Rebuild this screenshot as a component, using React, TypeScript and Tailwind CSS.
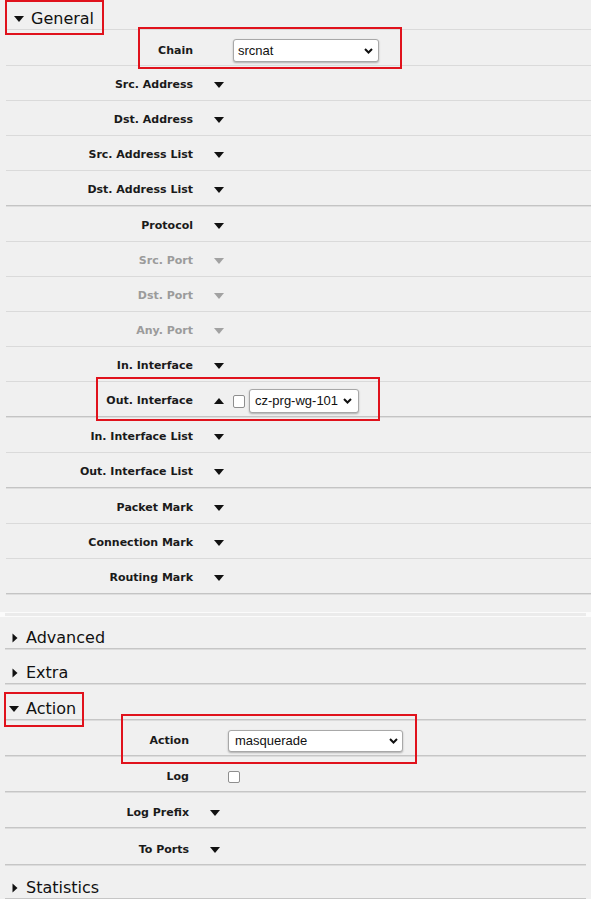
import React from "react";

const LABEL = "font-['DejaVu_Sans',Verdana,sans-serif] font-bold text-[11px] leading-[14px]";
const HEAD = "font-['DejaVu_Sans',Verdana,sans-serif] text-[16px] leading-[19px] text-[#111]";
const SELTXT = "font-['Liberation_Sans',Arial,sans-serif] text-[13px] leading-[16px] text-[#111]";

function Down({ c = "#111" }: { c?: string }) {
  return (
    <svg width="10" height="6" viewBox="0 0 10 6" className="shrink-0">
      <polygon points="0,0 10,0 5,6" fill={c} />
    </svg>
  );
}
function Up() {
  return (
    <svg width="10" height="6" viewBox="0 0 10 6" className="shrink-0">
      <polygon points="0,6 10,6 5,0" fill="#111" />
    </svg>
  );
}
function Right() {
  return (
    <svg width="10" height="10" viewBox="0 0 10 10" className="shrink-0">
      <polygon points="3.5,0.5 8.5,5 3.5,9.5" fill="#111" />
    </svg>
  );
}
function Chevron() {
  return (
    <svg width="9" height="6" viewBox="0 0 9 6" className="shrink-0">
      <path d="M1 1 L4.5 4.5 L8 1" stroke="#111" strokeWidth="2" fill="none" />
    </svg>
  );
}

function Sel({ box, text, pl, pr }: { box: string; text: string; pl: string; pr: string }) {
  return (
    <div
      className={`flex items-center justify-between bg-white border border-[#a8a8a8] rounded-[3px] shadow-[0_1px_2px_rgba(0,0,0,0.28)] ${box} ${pl} ${pr}`}
    >
      <span className={SELTXT}>{text}</span>
      <Chevron />
    </div>
  );
}

function Check({ box }: { box: string }) {
  return <div className={`bg-white border border-[#8e8e8e] rounded-[2px] shrink-0 ${box}`} />;
}

function LightLine() {
  return <div className="h-px bg-[#dadada]" />;
}
function GroupLine() {
  return (
    <>
      <div className="h-px bg-[#c4c4c4]" />
      <div className="h-px bg-[#dedede]" />
    </>
  );
}

type UpperRow = {
  label: string;
  kind?: "chain" | "out";
  dim?: boolean;
  group?: boolean;
};

const upper: UpperRow[] = [
  { label: "Chain", kind: "chain" },
  { label: "Src. Address" },
  { label: "Dst. Address" },
  { label: "Src. Address List" },
  { label: "Dst. Address List", group: true },
  { label: "Protocol" },
  { label: "Src. Port", dim: true },
  { label: "Dst. Port", dim: true },
  { label: "Any. Port", dim: true },
  { label: "In. Interface" },
  { label: "Out. Interface", kind: "out", group: true },
  { label: "In. Interface List" },
  { label: "Out. Interface List", group: true },
  { label: "Packet Mark" },
  { label: "Connection Mark" },
  { label: "Routing Mark", group: true },
];

function UpperRowView({ r }: { r: UpperRow }) {
  return (
    <>
      <div className={`flex items-center ${r.kind === "chain" ? "h-[35px] pt-[6px]" : "h-[34px] pt-[4px]"}`}>
        <div className={`w-[187px] text-right ${LABEL} ${r.dim ? "text-[#9b9b9b]" : "text-[#1a1a1a]"}`}>
          {r.label}
        </div>
        {r.kind === "chain" ? (
          <div className="ml-[40px]">
            <Sel box="w-[146px] h-[23px]" text="srcnat" pl="pl-[4px]" pr="pr-[5px]" />
          </div>
        ) : r.kind === "out" ? (
          <div className="ml-[21px] flex items-center">
            <Up />
            <div className="ml-[9px]">
              <Check box="w-[12px] h-[13px]" />
            </div>
            <div className="ml-[4px]">
              <Sel box="w-[110px] h-[24px]" text="cz-prg-wg-101" pl="pl-[5px]" pr="pr-[6px]" />
            </div>
          </div>
        ) : (
          <div className="ml-[21px] flex items-center">
            <Down c={r.dim ? "#a2a2a2" : "#111"} />
          </div>
        )}
      </div>
      {r.group ? <GroupLine /> : <LightLine />}
    </>
  );
}

function LowerLine() {
  return (
    <>
      <div className="h-px bg-[#c6c6c6]" />
      <div className="h-px bg-[#dcdcdc]" />
    </>
  );
}

function LowerHeader({ title, open, h }: { title: string; open?: boolean; h: string }) {
  return (
    <>
      <div className={`flex items-end pb-[1px] ${h}`}>
        <div className="ml-[4px] w-[10px] h-[19px] flex items-center">
          {open ? <Down /> : <Right />}
        </div>
        <span className={`ml-[7px] ${HEAD}`}>{title}</span>
      </div>
      <LowerLine />
    </>
  );
}

function LowerRow({ label, children, h = "h-[34px]" }: { label: string; children: React.ReactNode; h?: string }) {
  return (
    <>
      <div className={`flex items-center pt-[6px] ${h}`}>
        <div className={`w-[184px] text-right ${LABEL} text-[#1a1a1a]`}>{label}</div>
        {children}
      </div>
      <LowerLine />
    </>
  );
}

function RedBox({ cls }: { cls: string }) {
  return <div className={`absolute border-2 border-[#e0121c] pointer-events-none ${cls}`} />;
}

export default function App() {
  return (
    <div className="relative w-[591px] h-[899px] overflow-hidden bg-[#f0f0f0]">
      {/* Upper section: General */}
      <div className="ml-[6px]">
        <div className="flex items-end pb-[1px] h-[29px]">
          <div className="ml-[8px] w-[10px] h-[19px] flex items-center">
            <Down />
          </div>
          <span className={`ml-[7px] ${HEAD}`}>General</span>
        </div>
        <LightLine />
        {upper.map((r) => (
          <UpperRowView key={r.label} r={r} />
        ))}
      </div>

      {/* gap and white band */}
      <div className="mt-[17px] h-[5px] bg-[#fbfbfb] pt-[1px]">
        <div className="mx-[5px] h-[3px] bg-[#ebebeb]" />
      </div>

      {/* Lower section */}
      <div className="ml-[5px] w-[581px]">
        <LowerHeader title="Advanced" h="h-[31px]" />
        <LowerHeader title="Extra" h="h-[33px]" />
        <LowerHeader title="Action" open h="h-[34px]" />
        <LowerRow label="Action">
          <div className="ml-[39px]">
            <Sel box="w-[175px] h-[22px]" text="masquerade" pl="pl-[6px]" pr="pr-[4px]" />
          </div>
        </LowerRow>
        <LowerRow label="Log">
          <div className="ml-[39px]">
            <Check box="w-[12px] h-[12px]" />
          </div>
        </LowerRow>
        <LowerRow label="Log Prefix">
          <div className="ml-[21px] flex items-center">
            <Down />
          </div>
        </LowerRow>
        <LowerRow label="To Ports" h="h-[35px]">
          <div className="ml-[21px] flex items-center">
            <Down />
          </div>
        </LowerRow>
        <LowerHeader title="Statistics" h="h-[32px]" />
      </div>

      {/* Annotation boxes */}
      <RedBox cls="left-[5px] top-0 w-[99px] h-[35px]" />
      <RedBox cls="left-[138px] top-[27px] w-[264px] h-[42px]" />
      <RedBox cls="left-[96px] top-[377px] w-[284px] h-[44px]" />
      <RedBox cls="left-[4px] top-[692px] w-[80px] h-[35px]" />
      <RedBox cls="left-[121px] top-[714px] w-[296px] h-[50px]" />
    </div>
  );
}
